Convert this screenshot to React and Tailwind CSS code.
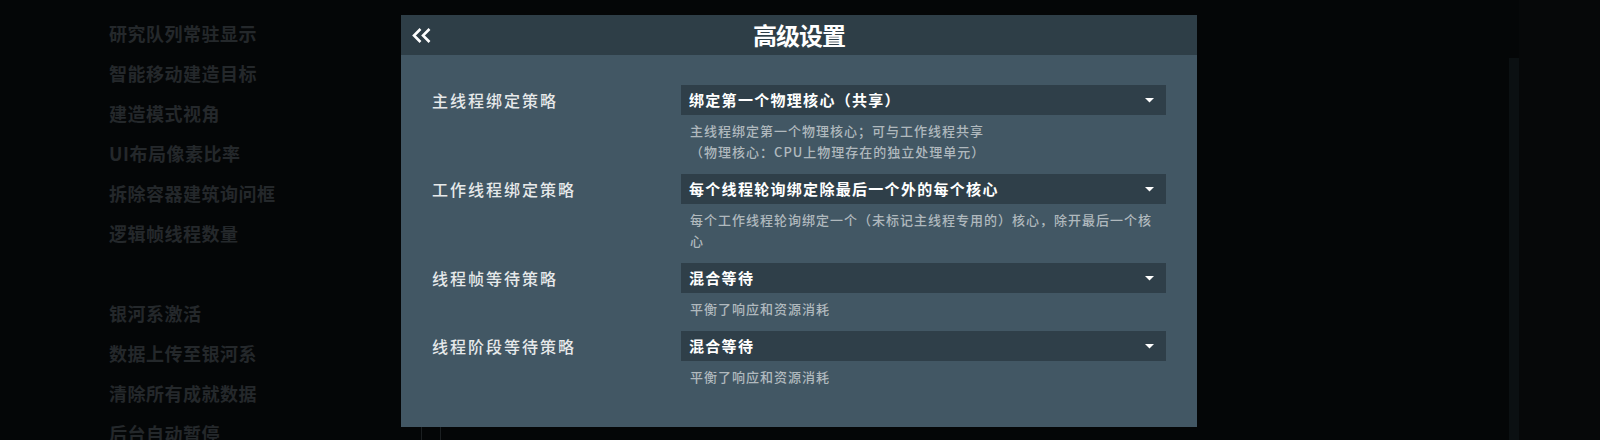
import React from 'react';

// --- background menu (dimmed behind the dialog) ---
const BG_ITEMS = [
  "研究队列常驻显示",
  "智能移动建造目标",
  "建造模式视角",
  "UI布局像素比率",
  "拆除容器建筑询问框",
  "逻辑帧线程数量",
  "",
  "银河系激活",
  "数据上传至银河系",
  "清除所有成就数据",
  "后台自动暂停",
];

const SETTINGS = [
  {
    label: "主线程绑定策略",
    value: "绑定第一个物理核心（共享）",
    desc: ["主线程绑定第一个物理核心；可与工作线程共享", "（物理核心：CPU上物理存在的独立处理单元）"],
  },
  {
    label: "工作线程绑定策略",
    value: "每个线程轮询绑定除最后一个外的每个核心",
    desc: ["每个工作线程轮询绑定一个（未标记主线程专用的）核心，除开最后一个核心"],
  },
  { label: "线程帧等待策略", value: "混合等待", desc: ["平衡了响应和资源消耗"] },
  { label: "线程阶段等待策略", value: "混合等待", desc: ["平衡了响应和资源消耗"] },
];

const BackIcon = () => (
  <svg width="19" height="15" viewBox="0 0 19 15" fill="none" stroke="white" strokeWidth="2.6" strokeLinejoin="miter">
    <path d="M8.5 1 L2 7.5 L8.5 14" />
    <path d="M17.5 1 L11 7.5 L17.5 14" />
  </svg>
);

const Caret = () => (
  <svg width="9" height="5" viewBox="0 0 9 5">
    <polygon points="0,0 9,0 4.5,4.5" fill="white" />
  </svg>
);

const SettingRow = ({ item }) => (
  <div className="grid grid-cols-[249px_485px] mb-[12px]">
    <div className="h-[30px] flex items-center text-[16px] font-medium tracking-[2px] text-[#e6e9ea]">{item.label}</div>
    <div className="flex flex-col">
      <div className="h-[30px] bg-[#2f3f49] flex items-center justify-between pl-[8px] pr-[12px]">
        <span className="text-[15px] font-bold tracking-[1.3px] text-white">{item.value}</span>
        <Caret />
      </div>
      <div className="pt-[5px] pl-[9px] w-[476px] text-[13px] font-medium leading-[21px] tracking-[1px] text-[#b0b9be]">
        {item.desc.map((line, i) => (
          <div key={i}>{line}</div>
        ))}
      </div>
    </div>
  </div>
);

export default function App() {
  return (
    <div className="relative w-[1600px] h-[440px] overflow-hidden bg-[#040607] font-['Noto_Sans_CJK_SC','Noto_Sans',sans-serif] flex">
      {/* background list */}
      <div className="w-[421px] pl-[109px] pt-[13px] flex flex-col">
        {BG_ITEMS.map((t, i) => (
          <div key={i} className="h-[40px] shrink-0 flex items-center text-[18px] font-bold tracking-[0.5px] text-[#24282b] whitespace-nowrap">
            {t}
          </div>
        ))}
      </div>
      <div className="w-[20px] flex flex-col justify-end">
        <div className="h-[14px] border-x border-[#1b1f21]" />
      </div>
      <div className="flex-1" />
      <div className="w-[10px] mt-[58px] bg-[#0b1012]" />
      <div className="w-[81px] bg-[#060809]" />

      {/* dialog */}
      <div className="absolute left-[401px] top-[15px] w-[796px] h-[412px] bg-[#425764] flex flex-col">
        <div className="h-[40px] bg-[#2e3e47] grid grid-cols-[1fr_auto_1fr] items-center">
          <div className="pl-[11px] flex items-center">
            <BackIcon />
          </div>
          <div className="text-[24px] font-bold tracking-[-1px] text-white">高级设置</div>
          <div />
        </div>
        <div className="pt-[30px] pl-[31px]">
          {SETTINGS.map((s) => (
            <SettingRow key={s.label} item={s} />
          ))}
        </div>
      </div>
    </div>
  );
}
